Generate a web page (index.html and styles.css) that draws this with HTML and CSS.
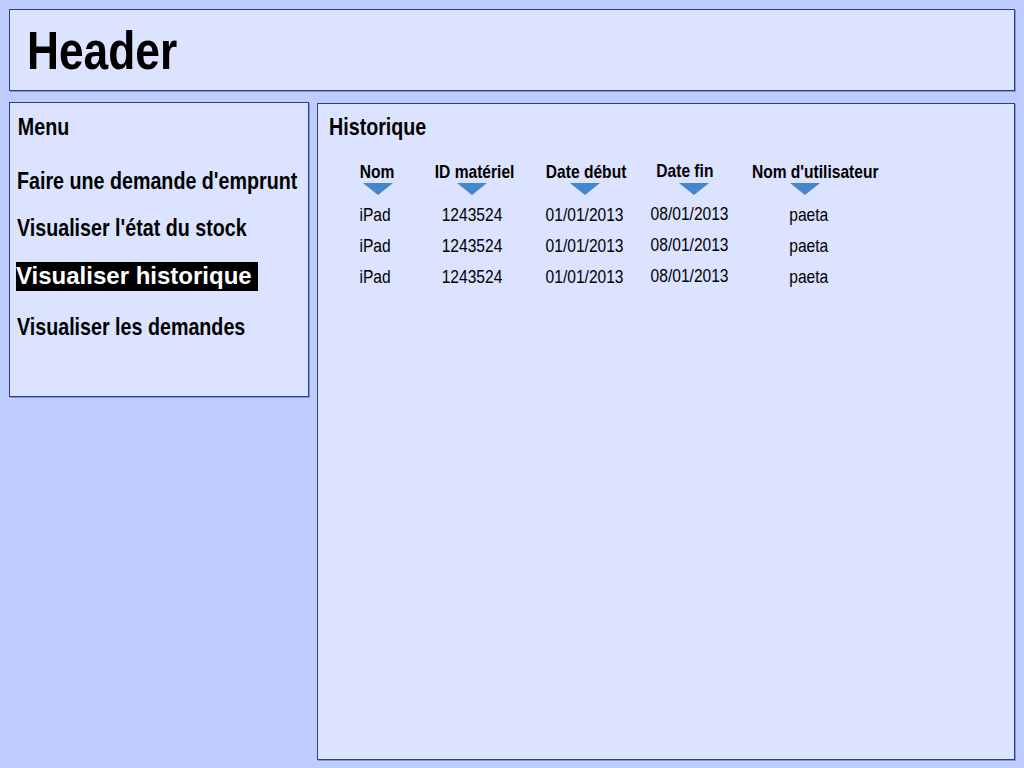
FILE: index.html
```html
<!DOCTYPE html>
<html lang="fr">
<head>
<meta charset="utf-8">
<title>Historique</title>
<link rel="stylesheet" href="styles.css">
</head>
<body>
<div class="page">
  <header class="header panel">
    <h1 class="header-title narrow">Header</h1>
  </header>
  <div class="content">
    <nav class="menu panel">
      <h2 class="panel-title narrow">Menu</h2>
      <ul class="menu-list">
        <li class="menu-item narrow item-1">Faire une demande d'emprunt</li>
        <li class="menu-item narrow item-2">Visualiser l'état du stock</li>
        <li class="menu-item item-3"><span class="menu-active">Visualiser historique&nbsp;</span></li>
        <li class="menu-item narrow item-4">Visualiser les demandes</li>
      </ul>
    </nav>
    <main class="main panel">
      <h2 class="panel-title narrow">Historique</h2>
      <div class="table">
        <div class="col col-nom">
          <div class="th narrow-c">Nom</div><div class="arrow"></div>
          <div class="td narrow-c">iPad</div><div class="td narrow-c">iPad</div><div class="td narrow-c">iPad</div>
        </div>
        <div class="col col-id">
          <div class="th narrow-c">ID matériel</div><div class="arrow"></div>
          <div class="td narrow-c">1243524</div><div class="td narrow-c">1243524</div><div class="td narrow-c">1243524</div>
        </div>
        <div class="col col-debut">
          <div class="th narrow-c">Date début</div><div class="arrow"></div>
          <div class="td narrow-c">01/01/2013</div><div class="td narrow-c">01/01/2013</div><div class="td narrow-c">01/01/2013</div>
        </div>
        <div class="col col-fin">
          <div class="th narrow-c">Date fin</div><div class="arrow"></div>
          <div class="td narrow-c">08/01/2013</div><div class="td narrow-c">08/01/2013</div><div class="td narrow-c">08/01/2013</div>
        </div>
        <div class="col col-user">
          <div class="th narrow-c">Nom d'utilisateur</div><div class="arrow"></div>
          <div class="td narrow-c">paeta</div><div class="td narrow-c">paeta</div><div class="td narrow-c">paeta</div>
        </div>
      </div>
    </main>
  </div>
</div>
</body>
</html>
```
FILE: styles.css
```css
* { box-sizing: border-box; }
html, body { margin: 0; padding: 0; }
body {
  background: #bfcdfe;
  font-family: "Liberation Sans", Arial, sans-serif;
  color: #000;
  width: 1024px;
  height: 768px;
  overflow: hidden;
}
/* Arial Narrow look: Liberation Sans compressed horizontally */
.narrow {
  transform: scaleX(0.82);
  transform-origin: left center;
  white-space: nowrap;
}
.narrow-c {
  transform: scaleX(0.82);
  transform-origin: center center;
  white-space: nowrap;
}
.page {
  padding: 9px;
}
.panel {
  background: #dbe3fe;
  border: 1px solid #2c3c8c;
  box-shadow: 1px 1px 0 #8796d2;
}
.header {
  height: 82px;
  padding: 9px 0 0 17px;
}
.header-title {
  margin: 0;
  font-size: 54px;
  line-height: 62px;
  font-weight: bold;
}
.content {
  display: flex;
  align-items: flex-start;
  gap: 8px;
  margin-top: 11px;
}
.menu {
  width: 300px;
  height: 295px;
  padding: 10px 0 0 7px;
}
.panel-title {
  margin: 0;
  font-size: 24px;
  line-height: 28px;
  font-weight: bold;
}
.menu .panel-title { padding-left: 1px; }
.menu-list {
  list-style: none;
  margin: 0;
  padding: 0;
}
.menu-item {
  font-size: 24px;
  line-height: 28px;
  font-weight: bold;
  white-space: nowrap;
}
.item-1 { margin-top: 26px; }
.item-2 { margin-top: 19px; }
.item-3 { margin-top: 20px; margin-left: -1px; }
.item-4 { margin-top: 23px; }
.menu-active {
  background: #000;
  color: #fff;
  padding-bottom: 2px;
}
.main {
  flex: 1;
  height: 657px;
  margin-top: 1px;
  padding: 9px 0 0 11px;
}
.table {
  display: flex;
  margin-top: 20px;
  margin-left: 1px;
}
.col {
  display: flex;
  flex-direction: column;
  align-items: center;
}
.col-nom { width: 94px; }
.col-id { width: 96px; }
.col-debut { width: 130px; }
.col-fin { width: 80px; margin-top: -1px; }
.col-user { width: 156px; }
.th {
  font-size: 19px;
  line-height: 22px;
  font-weight: bold;
}
.col-id .th { margin-left: 6px; }
.col-debut .th { margin-left: 2px; }
.col-fin .th { margin-right: 10px; }
.col-user .th { margin-left: 14px; }
.arrow {
  width: 0;
  height: 0;
  border-left: 15px solid transparent;
  border-right: 15px solid transparent;
  border-top: 12px solid #4686cc;
  margin-bottom: 4px;
}
.col-nom .arrow { margin-left: 2px; }
.col-fin .arrow { margin-left: 8px; margin-top: 1px; }
.col-user .arrow { margin-left: -6px; }
.td {
  font-size: 19px;
  line-height: 31px;
}
.col-nom .td { margin-right: 3px; }
.col-user .td { margin-left: 2px; }
.col-fin .arrow + .td { margin-top: -1px; }
```
